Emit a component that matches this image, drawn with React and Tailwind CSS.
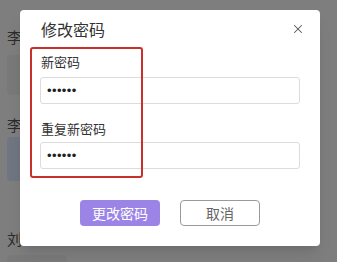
import { X } from "lucide-react";

export default function App() {
  return (
    <div
      className="relative w-[337px] h-[262px] overflow-hidden bg-[#7e7e7e]"
      style={{ fontFamily: '"Noto Sans CJK SC", "Noto Sans", sans-serif' }}
    >
      {/* page behind the overlay */}
      <div className="flex flex-col pl-[7px] pt-[27px] text-[#2b2b2b]">
        <div className="text-[15px] leading-[20px]">李</div>
        <div className="mt-[8px] h-[40px] w-[60px] rounded bg-[#797979]" />
        <div className="mt-[20px] text-[15px] leading-[20px]">李</div>
        <div className="mt-[2px] h-[44px] w-[60px] rounded bg-[#6f7682]" />
        <div className="mt-[48px] text-[15px] leading-[20px]">刘</div>
        <div className="mt-[6px] h-[20px] w-[60px] rounded bg-[#797979]" />
      </div>

      {/* dialog */}
      <div className="absolute left-[20px] top-[10px] w-[300px] h-[236px] rounded-[4px] bg-white shadow-lg">
        <div className="flex items-center justify-between pl-[21px] pr-[15px] pt-[7px]">
          <span className="text-[16px] leading-[24px] text-[#333]">修改密码</span>
          <X className="w-[14px] h-[14px] text-[#555]" strokeWidth={1.8} />
        </div>

        <div className="relative mt-[6px] px-[20px]">
          {/* red highlight box */}
          <div className="absolute left-[10px] top-0 w-[113px] h-[131px] rounded-[3px] border-2 border-[#c8302c] pointer-events-none" />

          <div className="pt-[6px] pl-[1px] text-[13px] leading-[18px] text-[#333]">新密码</div>
          <div
            className="mt-[6px] h-[27px] w-[260px] rounded-[3px] border border-[#dcdcdc] flex items-center pl-[6px] text-[#222] text-[13px] tracking-[0.4px]"
            style={{ fontFamily: '"Liberation Sans", sans-serif' }}
          >
            ••••••
          </div>

          <div className="mt-[16px] pl-[1px] text-[13px] leading-[18px] text-[#333]">重复新密码</div>
          <div
            className="mt-[4px] h-[27px] w-[260px] rounded-[3px] border border-[#dcdcdc] flex items-center pl-[6px] text-[#222] text-[13px] tracking-[0.4px]"
            style={{ fontFamily: '"Liberation Sans", sans-serif' }}
          >
            ••••••
          </div>
        </div>

        <div className="mt-[31px] flex gap-[20px] pl-[60px]">
          <button className="w-[80px] h-[26px] rounded-[4px] bg-[#9b84e6] text-white text-[14px] leading-[26px]">
            更改密码
          </button>
          <button className="w-[80px] h-[26px] rounded-[4px] border border-[#9a9a9a] bg-white text-[#666] text-[14px] leading-[24px]">
            取消
          </button>
        </div>
      </div>
    </div>
  );
}
